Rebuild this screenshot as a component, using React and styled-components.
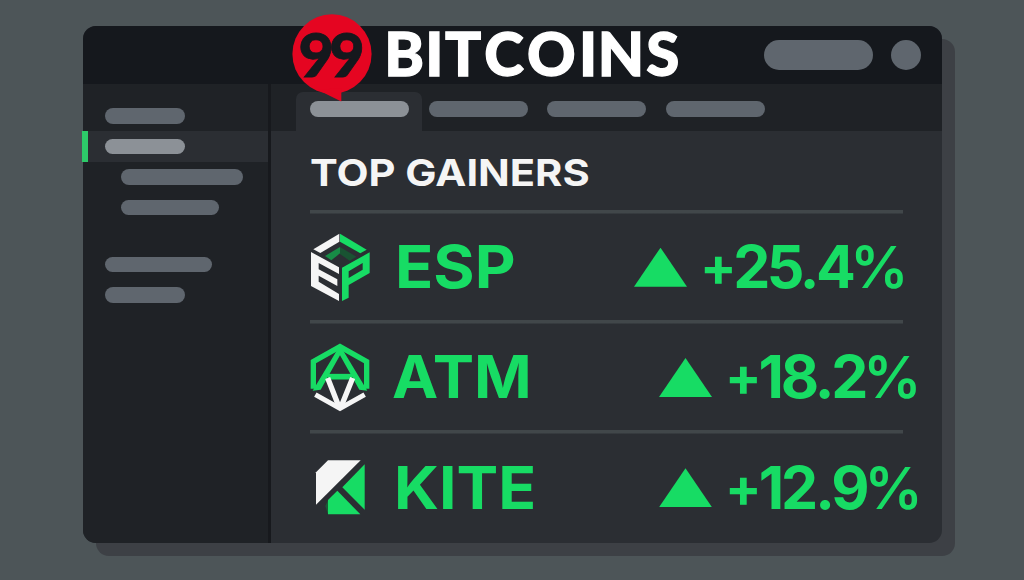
import styled, { createGlobalStyle } from 'styled-components';

const GlobalStyle = createGlobalStyle`
  * {
    box-sizing: border-box;
  }

  body {
    margin: 0;
    background: #4d5558;
    font-family: Inter, "Liberation Sans", sans-serif;
  }
`;

const Page = styled.main`
  width: 1024px;
  height: 580px;
  padding: 26px 82px 37px 83px;
  overflow: hidden;
`;

const Window = styled.section`
  display: flex;
  flex-direction: column;
  height: 517px;
  border-radius: 13px;
  background: #2b2e33;
  box-shadow: 13px 13px 0 #3d4045;
`;

const Header = styled.header`
  display: flex;
  align-items: center;
  flex: none;
  height: 58px;
  padding: 0 21px 0 209px;
  border-radius: 13px 13px 0 0;
  background: #15181d;

  .logo {
    flex: none;
    align-self: flex-start;
    margin-top: -12px;
    z-index: 1;
    overflow: visible;
  }
`;

const Pill = styled.span`
  display: block;
  flex: none;
  width: ${({ $width }) => $width}px;
  height: ${({ $height }) => $height || 15.5}px;
  margin-left: ${({ $indent }) => $indent || 0}px;
  border-radius: 15px;
  background: ${({ $active }) => ($active ? '#8c9197' : '#5f666e')};
`;

const Tools = styled.div`
  display: flex;
  gap: 18px;
  margin-left: auto;
`;

const Body = styled.div`
  display: flex;
  height: 459px;
`;

const Sidebar = styled.nav`
  width: 188px;
  padding-top: 16.6px;
  border-right: 3px solid #17191d;
  border-radius: 0 0 0 13px;
  background: #1f2226;
`;

const SideItem = styled.div`
  display: flex;
  align-items: center;
  height: 30.6px;
  margin-top: ${({ $gap }) => $gap || 0}px;
  padding-left: 21.5px;

  ${({ $active }) => $active && `
    margin-left: -1px;
    padding-left: 16.5px;
    border-left: 6px solid #2dca69;
    background: #2b2e33;
  `}
`;

const Main = styled.div`
  flex: 1;
`;

const Tabs = styled.div`
  display: flex;
  align-items: flex-end;
  height: 47px;
  padding-left: 25px;
  background: #1f2226;
`;

const Tab = styled.div`
  width: ${({ $active }) => ($active ? 126 : 118.7)}px;
  height: 39px;
  padding: 9px 0 0 ${({ $active }) => ($active ? 13.5 : 6.5)}px;
  border-radius: 7px 7px 0 0;
  background: ${({ $active }) => ($active ? '#2b2e33' : 'transparent')};
`;

const Gainers = styled.div`
  padding-left: 39px;
`;

const Title = styled.h1`
  width: max-content;
  height: 78.5px;
  margin: 0;
  color: #f5f5f5;
  font-size: 37.5px;
  font-weight: 700;
  line-height: 83px;
  white-space: nowrap;
  transform: scaleX(1.11);
  transform-origin: left;
`;

const Row = styled.div`
  display: grid;
  grid-template-columns: ${({ $nameStart }) => $nameStart}px 1fr max-content;
  align-items: center;
  width: ${({ $width }) => $width}px;
  height: 110.3px;
  background: linear-gradient(#41474a, #41474a) 0 0 / 593px 3.5px no-repeat;

  .coin {
    display: block;
    margin-top: 4px;
  }
`;

const Word = styled.span`
  display: block;
  width: max-content;
  margin-top: 5px;
  color: #17dc64;
  font-size: 59px;
  font-weight: 700;
  line-height: 100px;
  white-space: nowrap;
  transform: scaleX(${({ $stretch }) => $stretch || 1});
  transform-origin: left;
`;

const Amount = styled(Word)`
  width: 204px;
  letter-spacing: ${({ $spacing }) => $spacing}px;

  .plus {
    font-size: 54px;
    vertical-align: 2px;
  }

  .percent {
    margin-left: -2px;
    font-size: 58px;
    font-weight: 600;
  }
`;

const Change = styled.div`
  display: flex;
  align-items: center;
  gap: 13px;
`;

const Triangle = styled.i`
  width: 53px;
  height: 39px;
  margin-top: 5px;
  background: #17dc64;
  clip-path: polygon(50% 0, 100% 100%, 0 100%);
`;

function Logo() {
  return (
    <svg className="logo" width="392" height="90" viewBox="292 14 392 90">
      <ellipse cx="332" cy="54" rx="39.6" ry="39.7" fill="#e50521" />
      <path d="M318 90 L341.3 101.5 V88 Z" fill="#e50521" />
      <g fontFamily="Lato, sans-serif" fontWeight="900">
        <text x="298.5 329.3" y="76.6" fontSize="61" fill="#15181d" stroke="#15181d" strokeWidth="0.8">99</text>
        <text
          x="384.2 425.3 445 484.3 527 579 597.8 646.2"
          y="76.4"
          fontSize="60"
          fill="#fff"
          stroke="#fff"
          strokeWidth="1.3"
        >
          BITCOINS
        </text>
      </g>
    </svg>
  );
}

function EspIcon() {
  return (
    <svg className="coin" width="60" height="70" viewBox="30 20 180 210">
      <path d="M40 72 L118 25 V49 L61 83 Z" fill="#f5f5f5" />
      <path d="M120 25 L200 73 L181 84 L120 49 Z" fill="#17dc64" />
      <path d="M75 92 L120 65 V84 L94 105 Z" fill="#178c46" />
      <path d="M120 65 L169 94 L149 106 L120 86 Z" fill="#195332" />
      <path d="M33 80 L117 126 V146 L56 113 V132 L112 162 V182 L56 151 V169 L117 206 V227 L33 182 Z" fill="#f5f5f5" />
      <path fillRule="evenodd" d="M126 127 L209 81 V143 L146 179 V217 L126 227 Z M146 138 V158 L188 133 V113 Z" fill="#17dc64" />
    </svg>
  );
}

function AtmIcon() {
  return (
    <svg className="coin" width="60" height="70" viewBox="30 20 180 210" fill="none">
      <path d="M40 160 V79 L120 34 L200 79 V160" stroke="#17dc64" strokeWidth="16" />
      <path d="M120 30 L38 166 L62 163 L120 60 L178 163 L202 166 Z" fill="#17dc64" />
      <path d="M84 124 H156" stroke="#17dc64" strokeWidth="17" />
      <path d="M46 178 L120 219 L194 178" stroke="#f5f5f5" strokeWidth="15" />
      <path d="M83 128 L118 217 M158 128 L122 217" stroke="#f5f5f5" strokeWidth="16" />
    </svg>
  );
}

function KiteIcon() {
  return (
    <svg className="coin" width="60" height="70" viewBox="30 20 180 210">
      <path d="M84 45 H182 L48 178 V81 Z" fill="#f5f5f5" />
      <path d="M194 57 V193 L127 126 Z" fill="#17dc64" />
      <path d="M112 136 L181 207 H84 V164 Z" fill="#17dc64" />
      <path d="M84 164 V207 L76 182 Z" fill="#1b5a37" />
    </svg>
  );
}

const coins = [
  { name: 'ESP', value: '25.4', icon: <EspIcon />, nameStart: 84.5, stretch: 1.07, width: 594, spacing: -3.5 },
  { name: 'ATM', value: '18.2', icon: <AtmIcon />, nameStart: 82, stretch: 1.05, width: 619, spacing: -3.2 },
  { name: 'KITE', value: '12.9', icon: <KiteIcon />, nameStart: 84, stretch: 1.06, width: 619, spacing: -3 },
];

export default function App() {
  return (
    <Page>
      <GlobalStyle />
      <Window>
        <Header>
          <Logo />
          <Tools>
            <Pill $width={109} $height={30} />
            <Pill $width={30} $height={30} />
          </Tools>
        </Header>
        <Body>
          <Sidebar>
            <SideItem><Pill $width={80.5} /></SideItem>
            <SideItem $active><Pill $width={80.5} $active /></SideItem>
            <SideItem><Pill $width={122} $indent={16} /></SideItem>
            <SideItem><Pill $width={98.5} $indent={16} /></SideItem>
            <SideItem $gap={26}><Pill $width={107.5} /></SideItem>
            <SideItem><Pill $width={80.5} /></SideItem>
          </Sidebar>
          <Main>
            <Tabs>
              <Tab $active><Pill $width={99} $active /></Tab>
              <Tab><Pill $width={99} /></Tab>
              <Tab><Pill $width={99} /></Tab>
              <Tab><Pill $width={99} /></Tab>
            </Tabs>
            <Gainers>
              <Title>TOP GAINERS</Title>
              {coins.map((coin) => (
                <Row key={coin.name} $nameStart={coin.nameStart} $width={coin.width}>
                  {coin.icon}
                  <Word $stretch={coin.stretch}>{coin.name}</Word>
                  <Change>
                    <Triangle />
                    <Amount $spacing={coin.spacing}>
                      <span className="plus">+</span>
                      {coin.value}
                      <span className="percent">%</span>
                    </Amount>
                  </Change>
                </Row>
              ))}
            </Gainers>
          </Main>
        </Body>
      </Window>
    </Page>
  );
}
